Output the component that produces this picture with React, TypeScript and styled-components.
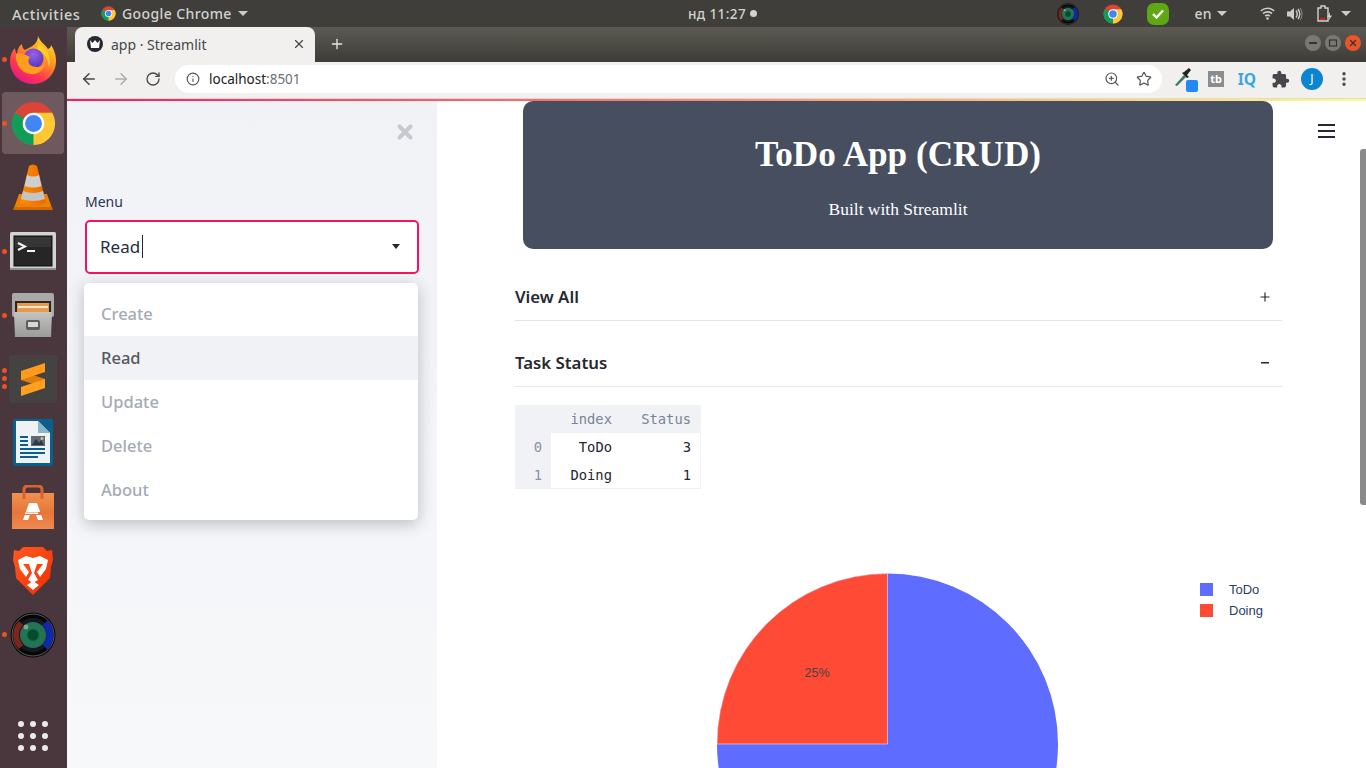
import React from "react";
import styled, { createGlobalStyle } from "styled-components";
import { ArrowLeft, ArrowRight, RotateCw, Info, ZoomIn, Star, Plus, X, EllipsisVertical } from "lucide-react";
import { MdExtension } from "react-icons/md";

const GlobalStyle = createGlobalStyle`
  html, body { margin: 0; padding: 0; width: 1366px; height: 768px; overflow: hidden; background: #fff; }
  * { box-sizing: border-box; }
`;

const ChromeIcon = ({ size }: { size: number }) => (
  <svg width={size} height={size} viewBox="0 0 48 48">
    <circle cx="24" cy="24" r="23" fill="#db4437" />
    <path d="M24 24 L4.1 12.5 A23 23 0 0 0 24 47 L35.5 27 Z" fill="#0f9d58" />
    <path d="M24 24 L24 47 A23 23 0 0 0 43.9 12.5 L24 12.5 Z" fill="#fcc934" />
    <circle cx="24" cy="24" r="11.5" fill="#fff" />
    <circle cx="24" cy="24" r="9" fill="#4285f4" />
  </svg>
);

const LensIcon = ({ size }: { size: number }) => (
  <svg width={size} height={size} viewBox="0 0 46 46">
    <defs>
      <radialGradient id={`lens${size}`} cx="50%" cy="50%" r="50%">
        <stop offset="0%" stopColor="#06402c" />
        <stop offset="55%" stopColor="#1c7a4f" />
        <stop offset="100%" stopColor="#2c6c5c" />
      </radialGradient>
    </defs>
    <circle cx="23" cy="23" r="22.500" fill="#070707" />
    <circle cx="23" cy="23" r="21" fill="none" stroke="#6b6d70" strokeWidth="0.800" />
    <circle cx="23" cy="23" r="17" fill="#151a22" />
    <path d="M11 11 A17 17 0 0 0 11 35" fill="none" stroke="#7a261b" strokeWidth="6" />
    <path d="M35 11 A17 17 0 0 1 35 35" fill="none" stroke="#0f2aa8" strokeWidth="7" />
    <circle cx="23" cy="23" r="13" fill={`url(#lens${size})`} />
    <circle cx="23" cy="23" r="5.500" fill="#064a30" />
    <circle cx="16" cy="15" r="2.400" fill="#b7cfae" opacity="0.6" />
  </svg>
);

const FirefoxIcon = () => (
  <svg width="46" height="48" viewBox="0 0 46 48">
    <defs>
      <linearGradient id="ffBody" x1="0.85" y1="0" x2="0.25" y2="1">
        <stop offset="0%" stopColor="#ffe226" />
        <stop offset="38%" stopColor="#ff9a1f" />
        <stop offset="72%" stopColor="#ff3750" />
        <stop offset="100%" stopColor="#e31587" />
      </linearGradient>
      <radialGradient id="ffCore" cx="50%" cy="30%" r="75%">
        <stop offset="0%" stopColor="#9a62ea" />
        <stop offset="100%" stopColor="#4930b4" />
      </radialGradient>
    </defs>
    <path d="M28 0 C30 6 35 8 38 13 C40 12 41 11 41 9 C45 15 46 20 46 25 C46 38 36 48 23 48 C10 48 0 38 0 25 C0 19 3 14 5 12 C5 15 6 17 7 18 C7 14 9 10 12 8 C12 11 13 13 15 14 C20 11 28 9 28 0 Z" fill="url(#ffBody)" />
    <circle cx="23.500" cy="22.500" r="10" fill="url(#ffCore)" />
    <path d="M6 18 C11 16 16 19 20 21 C16 26 20 31 27 31 C31 31 34 29 35 26 C35 34 28 39 20 38 C11 37 5 28 6 18 Z" fill="#ff9d1f" />
    <path d="M28 7 C36 12 42 20 39 31 C38 22 34 16 27 13 Z" fill="#ffd02b" />
  </svg>
);

const VlcIcon = () => (
  <svg width="40" height="46" viewBox="0 0 40 46">
    <defs>
      <linearGradient id="vlcBand" x1="0" y1="0" x2="1" y2="0">
        <stop offset="0%" stopColor="#ff8c00" />
        <stop offset="100%" stopColor="#e86a00" />
      </linearGradient>
    </defs>
    <path d="M6 30 L1 44 Q1 46 3 46 L37 46 Q39 46 39 44 L34 30 Z" fill="#f08000" />
    <path d="M1 43 L39 43 L40 46 L0 46 Z" fill="#d06a00" />
    <path d="M16 2 Q20 -1 24 2 L33 39 Q20 45 7 39 Z" fill="url(#vlcBand)" />
    <path d="M14 11 Q20 14 26 11 L28.500 22 Q20 25 11.500 22 Z" fill="#cfcfcf" />
    <path d="M10 27 Q20 31 30 27 L32 35 Q20 39 8 35 Z" fill="#c4c4c4" />
  </svg>
);

const TerminalIcon = () => (
  <svg width="46" height="38" viewBox="0 0 46 38">
    <rect x="0" y="0" width="46" height="38" rx="1.500" fill="#d2d4d2" />
    <rect x="0" y="36" width="46" height="2" fill="#8f9190" />
    <rect x="4" y="4" width="38" height="30" fill="#262626" stroke="#0d0d0d" />
    <rect x="5" y="5" width="36" height="10" fill="#363636" />
    <path d="M8 11 L15 14.500 L8 18" stroke="#f4f4f4" strokeWidth="2" fill="none" />
    <rect x="17" y="18" width="8" height="2" fill="#f4f4f4" />
  </svg>
);

const FilesIcon = () => (
  <svg width="42" height="44" viewBox="0 0 42 44">
    <defs>
      <linearGradient id="fileBody" x1="0" y1="0" x2="0" y2="1">
        <stop offset="0%" stopColor="#c4c4c2" />
        <stop offset="100%" stopColor="#9b9b99" />
      </linearGradient>
    </defs>
    <rect x="0" y="0" width="42" height="24" rx="2" fill="#a9a9a7" />
    <rect x="3" y="8" width="36" height="15" fill="#2a2826" />
    <rect x="5" y="10" width="32" height="10" fill="#e79a4c" />
    <rect x="6" y="13" width="30" height="2" fill="#f7e6cf" />
    <path d="M2 19 L40 19 L39 44 L3 44 Z" fill="url(#fileBody)" />
    <rect x="14" y="27" width="14" height="10" rx="2" fill="#5f5f5d" />
    <rect x="16" y="29" width="10" height="5" fill="#d8d8d6" />
  </svg>
);

const SublimeIcon = () => (
  <svg width="48" height="48" viewBox="0 0 48 48">
    <rect width="48" height="48" rx="3" fill="#444342" />
    <path d="M12 25 L36 33 L36 24 L12 16 Z" fill="#e07f0e" />
    <path d="M12 16 L36 8 L36 17 L12 25 Z" fill="#ff9a1a" />
    <path d="M36 24 L36 33 L12 41 L12 32 Z" fill="#ffa020" />
  </svg>
);

const WriterIcon = () => (
  <svg width="40" height="48" viewBox="0 0 40 48">
    <path d="M2 0 L40 0 L40 45 Q40 47 38 47 L3 47 Q0 47 0 45 L0 2 Q0 0 2 0 Z" fill="#0a5f8c" />
    <path d="M3 2 L25 2 L37 14 L37 44 L3 44 Z" fill="#eef2f5" />
    <path d="M25 2 L37 14 L25 14 Z" fill="#8fb3c7" />
    <rect x="7" y="17" width="8" height="2" fill="#0a5f8c" />
    <rect x="7" y="21" width="8" height="2" fill="#0a5f8c" />
    <rect x="7" y="25" width="8" height="2" fill="#0a5f8c" />
    <rect x="7" y="29" width="25" height="2" fill="#0a5f8c" />
    <rect x="7" y="33" width="25" height="2" fill="#0a5f8c" />
    <rect x="7" y="37" width="18" height="2" fill="#0a5f8c" />
    <rect x="18" y="17" width="14" height="10" fill="#5a6c78" />
    <path d="M19 26 L23 20 L26 24 L28 21 L31 26 Z" fill="#2c3a44" />
    <circle cx="29" cy="19.500" r="1.500" fill="#e6c35c" />
  </svg>
);

const SoftwareIcon = () => (
  <svg width="42" height="44" viewBox="0 0 42 44">
    <defs>
      <linearGradient id="bag" x1="0" y1="0" x2="0" y2="1">
        <stop offset="0%" stopColor="#ef9250" />
        <stop offset="55%" stopColor="#e8753a" />
        <stop offset="100%" stopColor="#ef8a50" />
      </linearGradient>
    </defs>
    <rect x="0" y="8" width="42" height="36" fill="url(#bag)" />
    <path d="M12 14 L12 5 Q12 1 16 1 L26 1 Q30 1 30 5 L30 14" fill="none" stroke="#d9642f" strokeWidth="3" />
    <path d="M17 18 L25 18 L31 35 L26 35 L24 30 L18 30 L16 35 L11 35 Z" fill="#fff" />
    <rect x="12" y="27" width="18" height="3" fill="#e8753a" />
    <rect x="13" y="27.500" width="13" height="1.500" fill="#fff" />
  </svg>
);

const BraveIcon = () => (
  <svg width="40" height="48" viewBox="0 0 40 48">
    <defs>
      <linearGradient id="brave" x1="0" y1="0" x2="1" y2="1">
        <stop offset="0%" stopColor="#ff5a1f" />
        <stop offset="100%" stopColor="#f02f00" />
      </linearGradient>
    </defs>
    <path d="M10 0 L30 0 L34 4 L39 3 L40 13 L38 20 L37 31 L30 38 L20 48 L10 38 L3 31 L2 20 L0 13 L1 3 L6 4 Z" fill="url(#brave)" />
    <path d="M5 13 L13 9 L20 11 L27 9 L35 13 L33 22 L27 30 L24 25 L30 17 L24 17 L21 26 L25 33 L20 36 L15 33 L19 26 L16 17 L10 17 L16 25 L13 30 L7 22 Z" fill="#fff" />
    <path d="M14 38 L20 34 L26 38 L20 43 Z" fill="#fff" />
  </svg>
);

const WifiIcon = () => (
  <svg width="15" height="13" viewBox="0 0 15 13" fill="none" stroke="#cfccc6" strokeWidth="1.600">
    <path d="M0.800 3.800 Q7.500 -1.200 14.200 3.800" />
    <path d="M3 6.500 Q7.500 3.200 12 6.500" />
    <path d="M5.200 9 Q7.500 7.300 9.800 9" />
    <circle cx="7.500" cy="11.500" r="1.300" fill="#cfccc6" stroke="none" />
  </svg>
);

const VolumeIcon = () => (
  <svg width="16" height="14" viewBox="0 0 16 14">
    <path d="M0 4.500 L3 4.500 L7 1 L7 13 L3 9.500 L0 9.500 Z" fill="#cfccc6" />
    <path d="M9 3.500 Q11.500 7 9 10.500 M11 2 Q14.500 7 11 12" fill="none" stroke="#cfccc6" strokeWidth="1.400" />
    <path d="M13.200 1 Q17 7 13.200 13" fill="none" stroke="#8f8d88" strokeWidth="1" />
  </svg>
);

const BatteryIcon = () => (
  <svg width="16" height="17" viewBox="0 0 16 17">
    <path d="M1 3 L4 3 L4 1 L8 1 L8 3 L11 3 L11 16 L1 16 Z" fill="none" stroke="#d5d2cc" strokeWidth="1.400" />
    <rect x="3" y="13" width="5" height="2" fill="#d3231c" />
    <path d="M13 7 L10 12 L12.500 12 L11.500 16 L15 10.500 L12.800 10.500 Z" fill="#d5d2cc" />
  </svg>
);

const Screen = styled.div`
  width: 1366px;
  height: 768px;
  display: flex;
  flex-direction: column;
  overflow: hidden;
  font-family: "Noto Sans", sans-serif;
`;

const TopBar = styled.div`
  height: 27px;
  flex: none;
  display: flex;
  align-items: center;
  position: relative;
  background: #3f3e3a;
  color: #d2d2ce;
  font-size: 14px;
  font-weight: 500;
  letter-spacing: 0.4px;
`;

const Activities = styled.span`
  margin-left: 12px;
  width: 89px;
  font-size: 14.500px;
  letter-spacing: 0.6px;
`;

const AppMenu = styled.div`
  display: flex;
  align-items: center;
  gap: 6px;
`;

const Caret = styled.span<{ $light?: boolean; $small?: boolean }>`
  width: 0;
  height: 0;
  border-left: ${(p) => (p.$small ? "4.500px" : "5px")} solid transparent;
  border-right: ${(p) => (p.$small ? "4.500px" : "5px")} solid transparent;
  border-top: 5px solid ${(p) => (p.$light ? "#cfccc6" : "#262730")};
`;

const Clock = styled.div`
  position: absolute;
  left: 688px;
  top: 0;
  height: 27px;
  display: flex;
  align-items: center;
  gap: 4px;
  font-size: 13.500px;
`;

const ClockDot = styled.span`
  width: 7px;
  height: 7px;
  border-radius: 50%;
  background: #d2d2ce;
`;

const Tray = styled.div`
  margin-left: auto;
  display: flex;
  align-items: center;
  padding-right: 15px;
`;

const TraySlot = styled.div<{ $w: number; $end?: boolean }>`
  width: ${(p) => p.$w}px;
  display: flex;
  align-items: center;
  justify-content: ${(p) => (p.$end ? "flex-end" : "center")};
`;

const TrayLabel = styled.span`
  margin-right: 5px;
`;

const CheckBadge = styled.div`
  width: 22px;
  height: 22px;
  border-radius: 7px;
  background: #5fa815;
  display: flex;
  align-items: center;
  justify-content: center;
`;

const Body = styled.div`
  flex: 1;
  display: flex;
  min-height: 0;
`;

const Dock = styled.div`
  width: 67px;
  flex: none;
  display: flex;
  flex-direction: column;
  padding-top: 1.500px;
  background: #4a373e;
`;

const DockItem = styled.div<{ $active?: boolean }>`
  position: relative;
  width: 62px;
  height: 62px;
  margin: 0 0 1.900px 2px;
  border-radius: 4px;
  display: flex;
  align-items: center;
  justify-content: center;
  background: ${(p) => (p.$active ? "#6e5a5e" : "transparent")};
`;

const RunDots = styled.div`
  position: absolute;
  left: 0;
  top: 0;
  bottom: 0;
  display: flex;
  flex-direction: column;
  justify-content: center;
  gap: 3px;
`;

const RunDot = styled.span`
  width: 5px;
  height: 5px;
  border-radius: 50%;
  background: #e95420;
`;

const AppGrid = styled.div`
  margin: auto 0 17px 18px;
  display: grid;
  grid-template-columns: repeat(3, 6px);
  gap: 6px;
`;

const GridDot = styled.span`
  width: 6px;
  height: 6px;
  border-radius: 50%;
  background: #ecebea;
`;

const Browser = styled.div`
  flex: 1;
  min-width: 0;
  display: flex;
  flex-direction: column;
`;

const TabStrip = styled.div`
  height: 35px;
  flex: none;
  display: flex;
  align-items: flex-end;
  padding-left: 8px;
  background: linear-gradient(180deg, #5c5a52 0%, #3d3c38 100%);
`;

const Tab = styled.div`
  width: 240px;
  height: 35px;
  display: flex;
  align-items: center;
  padding: 0 9px 1px 12px;
  border-radius: 8px 8px 0 0;
  background: #f1f0ee;
  color: #45474a;
  font-size: 14px;
  font-weight: 400;
`;

const Favicon = styled.span`
  width: 16px;
  height: 16px;
  margin-right: 8px;
  border-radius: 50%;
  background: #262730;
  display: flex;
  align-items: center;
  justify-content: center;
`;

const TabTitle = styled.span`
  flex: 1;
`;

const NewTab = styled.div`
  margin: 0 0 10px 14px;
  display: flex;
  color: #e8e6e2;
`;

const WindowButtons = styled.div`
  margin: 0 5px 11px auto;
  display: flex;
  gap: 4px;
`;

const WindowButton = styled.div<{ $close?: boolean }>`
  width: 16px;
  height: 16px;
  border-radius: 50%;
  display: flex;
  align-items: center;
  justify-content: center;
  background: ${(p) => (p.$close ? "#e9542a" : "#7a7872")};
  color: #35342f;
`;

const Toolbar = styled.div`
  height: 37px;
  flex: none;
  display: flex;
  align-items: center;
  padding-bottom: 2px;
  background: #f1f0ee;
  border-bottom: 1px solid #dcdbd9;
`;

const NavButton = styled.div<{ $w: number }>`
  width: ${(p) => p.$w}px;
  flex: none;
  display: flex;
  justify-content: center;
  color: #45474a;
`;

const UrlBar = styled.div`
  width: 987px;
  height: 28px;
  margin: 0 12px 0 0;
  flex: none;
  display: flex;
  align-items: center;
  padding: 0 2px 0 11px;
  border-radius: 14px;
  background: #fff;
  color: #55575a;
`;

const UrlHost = styled.span`
  margin-left: 9px;
  flex: 1;
  color: #202124;
  font-size: 13.500px;
`;

const UrlPort = styled.span`
  color: #6d7073;
`;

const UrlAction = styled.span`
  width: 32px;
  display: flex;
  justify-content: center;
`;

const Dropper = styled.div`
  position: relative;
  width: 24px;
  height: 24px;
`;

const BlueSquare = styled.span`
  position: absolute;
  right: 0;
  bottom: -1px;
  width: 12px;
  height: 12px;
  border-radius: 2px;
  background: #2488f5;
`;

const TbBadge = styled.div`
  width: 16px;
  height: 16px;
  background: #8c8c8c;
  color: #fff;
  font-size: 11px;
  font-weight: 700;
  line-height: 16px;
  text-align: center;
`;

const IqBadge = styled.div`
  color: #39a7e3;
  font-size: 15.500px;
  line-height: 18px;
  font-weight: 700;
`;

const Avatar = styled.div`
  width: 22px;
  height: 22px;
  border-radius: 50%;
  background: #0b85cf;
  color: #fff;
  font-size: 12px;
  line-height: 22px;
  text-align: center;
`;

const Decoration = styled.div`
  height: 2px;
  flex: none;
  background: linear-gradient(90deg, #fb1a60, #fffd80);
`;

const Page = styled.div`
  flex: 1;
  min-height: 0;
  display: flex;
  position: relative;
  overflow: hidden;
  background: #fff;
`;

const Sidebar = styled.aside`
  width: 370px;
  flex: none;
  position: relative;
  padding: 91px 18px 0;
  background: linear-gradient(180deg, #f0f2f6 0%, #f7f8fa 100%);
  font-family: "Noto Sans", sans-serif;
`;

const SidebarClose = styled.div`
  position: absolute;
  top: 20px;
  right: 21px;
  display: flex;
  color: #c6c9cf;
`;

const FieldLabel = styled.label`
  display: block;
  margin-bottom: 9px;
  color: #2c3450;
  font-size: 14px;
  line-height: 19px;
`;

const SelectBox = styled.div`
  width: 334px;
  height: 54px;
  display: flex;
  align-items: center;
  padding: 0 17px 1px 13px;
  border: 2px solid #f5135f;
  border-radius: 5px;
  background: #fff;
  color: #262c40;
  font-size: 17px;
`;

const TextCursor = styled.span`
  width: 1px;
  height: 23px;
  margin-left: 2px;
  margin-right: auto;
  background: #262730;
`;

const Menu = styled.div`
  position: absolute;
  left: 16.500px;
  top: 182px;
  width: 334px;
  height: 237px;
  padding: 9px 0;
  border-radius: 5px;
  background: #fff;
  box-shadow: 0 4px 16px rgba(40, 44, 60, 0.28);
`;

const MenuItem = styled.div<{ $active?: boolean }>`
  height: 44px;
  display: flex;
  align-items: center;
  padding: 0 0 2px 17.500px;
  background: ${(p) => (p.$active ? "#f0f2f6" : "transparent")};
  color: ${(p) => (p.$active ? "#55585f" : "#a6aab4")};
  font-size: 16.500px;
  font-weight: 500;
`;

const Main = styled.main`
  flex: 1;
  min-width: 0;
  padding-left: 78px;
`;

const Content = styled.div`
  width: 767px;
`;

const Banner = styled.header`
  width: 750px;
  height: 148px;
  margin-left: 8px;
  padding-top: 32px;
  border-radius: 10px;
  background: #464e5f;
  color: #fff;
  font-family: "Liberation Serif", serif;
  text-align: center;
`;

const BannerTitle = styled.h1`
  margin: 0;
  font-size: 35.200px;
  line-height: 44px;
  font-weight: 700;
`;

const BannerSub = styled.p`
  margin: 21px 0 0;
  font-size: 17.500px;
  line-height: 22px;
`;

const Expander = styled.div<{ $gap: number }>`
  height: 47px;
  margin-top: ${(p) => p.$gap}px;
  display: flex;
  align-items: center;
  justify-content: space-between;
  padding: 0 10px 2px 0;
  border-bottom: 1px solid #e3e5ea;
  color: #262730;
  font-size: 16.800px;
  font-weight: 600;
`;

const ExpanderSign = styled.span`
  display: flex;
  margin-top: 2px;
  color: #262730;
`;

const DataTable = styled.table`
  margin-top: 18px;
  border-collapse: separate;
  border-spacing: 0;
  font-family: "DejaVu Sans Mono", monospace;
  font-size: 13.800px;
  color: #262730;
`;

const HeadCell = styled.th<{ $w: number }>`
  width: ${(p) => p.$w}px;
  height: 28px;
  padding: 0 10px 0 0;
  background: #f0f2f6;
  color: #7a8296;
  font-weight: 400;
  text-align: right;
`;

const IndexCell = styled.td`
  width: 36px;
  height: 28px;
  padding: 0 9px 0 0;
  background: #f0f2f6;
  color: #8a92a5;
  text-align: right;
`;

const ValueCell = styled.td<{ $last?: boolean; $edge?: boolean }>`
  height: 28px;
  padding: 0 ${(p) => (p.$edge ? 9 : 10)}px 0 0;
  border-bottom: ${(p) => (p.$last ? "1px solid #f0f2f6" : "none")};
  border-right: ${(p) => (p.$edge ? "1px solid #f0f2f6" : "none")};
  text-align: right;
`;

const ChartBox = styled.div`
  margin-top: 31px;
  height: 250px;
`;

const ChartSvg = styled.svg`
  display: block;
  overflow: visible;
  font-family: "Liberation Sans", sans-serif;
`;

const Hamburger = styled.div`
  position: absolute;
  left: 1251px;
  top: 23px;
  width: 17px;
  display: flex;
  flex-direction: column;
  gap: 4px;
`;

const HamburgerBar = styled.span`
  height: 2px;
  background: #262730;
`;

const Scrollbar = styled.div`
  position: absolute;
  right: 0;
  top: 48px;
  width: 6px;
  height: 356px;
  border-radius: 3px 0 0 3px;
  background: #8a8a8a;
`;

const dockIcons: { key: string; icon: React.ReactNode; dots: number; active?: boolean }[] = [
  { key: "firefox", icon: <FirefoxIcon />, dots: 1 },
  { key: "chrome", icon: <ChromeIcon size={45} />, dots: 1, active: true },
  { key: "vlc", icon: <VlcIcon />, dots: 0 },
  { key: "terminal", icon: <TerminalIcon />, dots: 1 },
  { key: "files", icon: <FilesIcon />, dots: 1 },
  { key: "sublime", icon: <SublimeIcon />, dots: 3 },
  { key: "writer", icon: <WriterIcon />, dots: 0 },
  { key: "software", icon: <SoftwareIcon />, dots: 0 },
  { key: "brave", icon: <BraveIcon />, dots: 0 },
  { key: "camera", icon: <LensIcon size={46} />, dots: 1 },
];

const menuItems = ["Create", "Read", "Update", "Delete", "About"];

const App = () => {
  return (
    <Screen>
      <GlobalStyle />
      <TopBar>
        <Activities>Activities</Activities>
        <AppMenu>
          <ChromeIcon size={15} />
          <span>Google Chrome</span>
          <Caret $light />
        </AppMenu>
        <Clock>
          <span>нд 11:27</span>
          <ClockDot />
        </Clock>
        <Tray>
          <TraySlot $w={22}>
            <LensIcon size={22} />
          </TraySlot>
          <TraySlot $w={68}>
            <ChromeIcon size={20} />
          </TraySlot>
          <TraySlot $w={22}>
            <CheckBadge>
              <svg width="12" height="10" viewBox="0 0 12 10" fill="none" stroke="#fff" strokeWidth="2.400">
                <path d="M1 5 L4.500 8.500 L11 1.500" />
              </svg>
            </CheckBadge>
          </TraySlot>
          <TraySlot $w={48} $end>
            <TrayLabel>en</TrayLabel>
          </TraySlot>
          <Caret $light />
          <TraySlot $w={48} $end>
            <WifiIcon />
          </TraySlot>
          <TraySlot $w={28} $end>
            <VolumeIcon />
          </TraySlot>
          <TraySlot $w={30} $end>
            <BatteryIcon />
          </TraySlot>
          <TraySlot $w={18} $end>
            <Caret $light />
          </TraySlot>
        </Tray>
      </TopBar>
      <Body>
        <Dock>
          {dockIcons.map((item) => (
            <DockItem key={item.key} $active={item.active}>
              <RunDots>
                {Array.from({ length: item.dots }).map((_, index) => (
                  <RunDot key={index} />
                ))}
              </RunDots>
              {item.icon}
            </DockItem>
          ))}
          <AppGrid>
            {Array.from({ length: 9 }).map((_, index) => (
              <GridDot key={index} />
            ))}
          </AppGrid>
        </Dock>
        <Browser>
          <TabStrip>
            <Tab>
              <Favicon>
                <svg width="10" height="8" viewBox="0 0 10 8">
                  <path d="M0 0 L2.500 3 L5 0 L7.500 3 L10 0 L9 8 L1 8 Z" fill="#fff" />
                </svg>
              </Favicon>
              <TabTitle>app · Streamlit</TabTitle>
              <X size={14} strokeWidth={2} />
            </Tab>
            <NewTab>
              <Plus size={16} strokeWidth={2} />
            </NewTab>
            <WindowButtons>
              <WindowButton>
                <svg width="10" height="10" viewBox="0 0 10 10">
                  <rect x="1" y="4" width="8" height="2" fill="#35342f" />
                </svg>
              </WindowButton>
              <WindowButton>
                <svg width="10" height="10" viewBox="0 0 10 10" fill="none" stroke="#35342f" strokeWidth="1.200">
                  <rect x="1.500" y="2" width="7" height="6" />
                </svg>
              </WindowButton>
              <WindowButton $close>
                <X size={10} strokeWidth={3} />
              </WindowButton>
            </WindowButtons>
          </TabStrip>
          <Toolbar>
            <NavButton $w={44}>
              <ArrowLeft size={18} strokeWidth={2} />
            </NavButton>
            <NavButton $w={20}>
              <ArrowRight size={18} strokeWidth={2} color="#adadab" />
            </NavButton>
            <NavButton $w={44}>
              <RotateCw size={16} strokeWidth={2} />
            </NavButton>
            <UrlBar>
              <Info size={14} strokeWidth={2} />
              <UrlHost>
                localhost<UrlPort>:8501</UrlPort>
              </UrlHost>
              <UrlAction>
                <ZoomIn size={16} strokeWidth={1.800} />
              </UrlAction>
              <UrlAction>
                <Star size={16} strokeWidth={1.800} />
              </UrlAction>
            </UrlBar>
            <Dropper>
              <svg width="18" height="20" viewBox="0 0 18 20">
                <path d="M1 18 L10 8 L12 10 L3 19 Z" fill="#3d7a5f" />
                <path d="M10 5 L15 1 L17 3 L13 8 L15 10 L13 11 L8 6 Z" fill="#222" />
              </svg>
              <BlueSquare />
            </Dropper>
            <NavButton $w={36}>
              <TbBadge>tb</TbBadge>
            </NavButton>
            <NavButton $w={26}>
              <IqBadge>IQ</IqBadge>
            </NavButton>
            <NavButton $w={40}>
              <MdExtension size={19} />
            </NavButton>
            <NavButton $w={24}>
              <Avatar>J</Avatar>
            </NavButton>
            <NavButton $w={40}>
              <EllipsisVertical size={18} strokeWidth={2.500} />
            </NavButton>
          </Toolbar>
          <Decoration />
          <Page>
            <Sidebar>
              <SidebarClose>
                <X size={22} strokeWidth={4.500} />
              </SidebarClose>
              <FieldLabel>Menu</FieldLabel>
              <SelectBox>
                <span>Read</span>
                <TextCursor />
                <Caret $small />
              </SelectBox>
              <Menu>
                {menuItems.map((item) => (
                  <MenuItem key={item} $active={item === "Read"}>
                    {item}
                  </MenuItem>
                ))}
              </Menu>
            </Sidebar>
            <Main>
              <Content>
                <Banner>
                  <BannerTitle>ToDo App (CRUD)</BannerTitle>
                  <BannerSub>Built with Streamlit</BannerSub>
                </Banner>
                <Expander $gap={25}>
                  <span>View All</span>
                  <ExpanderSign>
                    <Plus size={14} strokeWidth={2} />
                  </ExpanderSign>
                </Expander>
                <Expander $gap={19}>
                  <span>Task Status</span>
                  <ExpanderSign>
                    <svg width="14" height="14" viewBox="0 0 14 14">
                      <rect x="3" y="6" width="8" height="1.500" fill="#262730" />
                    </svg>
                  </ExpanderSign>
                </Expander>
                <DataTable>
                  <thead>
                    <tr>
                      <HeadCell $w={36} />
                      <HeadCell $w={71}>index</HeadCell>
                      <HeadCell $w={79}>Status</HeadCell>
                    </tr>
                  </thead>
                  <tbody>
                    <tr>
                      <IndexCell>0</IndexCell>
                      <ValueCell>ToDo</ValueCell>
                      <ValueCell $edge>3</ValueCell>
                    </tr>
                    <tr>
                      <IndexCell>1</IndexCell>
                      <ValueCell $last>Doing</ValueCell>
                      <ValueCell $last $edge>1</ValueCell>
                    </tr>
                  </tbody>
                </DataTable>
                <ChartBox>
                  <ChartSvg width="767" height="250">
                    <circle cx="372.500" cy="224" r="170.500" fill="#5e6cff" />
                    <path d="M372.500 224 L372.500 53.500 A170.500 170.500 0 0 0 202 224 Z" fill="#ff4a36" stroke="#fff" strokeWidth="0.500" />
                    <text x="302" y="157" fontSize="12.500" fill="#444" textAnchor="middle">
                      25%
                    </text>
                    <rect x="685" y="63" width="13" height="13" fill="#5e6cff" />
                    <rect x="685" y="84" width="13" height="13" fill="#ff4a36" />
                    <text x="714" y="74" fontSize="13" fill="#2a3f5f">
                      ToDo
                    </text>
                    <text x="714" y="95" fontSize="13" fill="#2a3f5f">
                      Doing
                    </text>
                  </ChartSvg>
                </ChartBox>
              </Content>
            </Main>
            <Hamburger>
              <HamburgerBar />
              <HamburgerBar />
              <HamburgerBar />
            </Hamburger>
            <Scrollbar />
          </Page>
        </Browser>
      </Body>
    </Screen>
  );
};

export default App;
